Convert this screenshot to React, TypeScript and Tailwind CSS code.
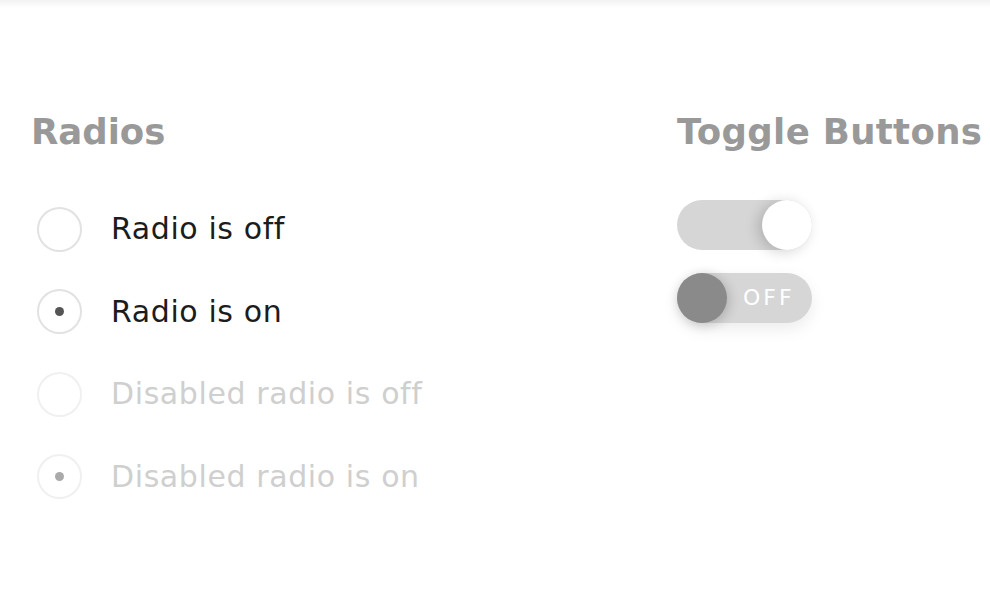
import React from 'react';

const font = { fontFamily: '"DejaVu Sans", "Liberation Sans", sans-serif' };

type RadioProps = { label: string; checked?: boolean; disabled?: boolean };

const Radio: React.FC<RadioProps> = ({ label, checked, disabled }) => (
  <label className="flex items-center h-[45px]">
    <span
      className={`ml-[6px] w-[45px] h-[45px] rounded-full border-2 flex items-center justify-center flex-shrink-0 ${
        disabled ? 'border-[#f0f0f0]' : 'border-[#e2e2e2]'
      }`}
    >
      {checked && (
        <span className={`w-[9px] h-[9px] rounded-full ${disabled ? 'bg-[#aaaaaa]' : 'bg-[#555555]'}`} />
      )}
    </span>
    <span
      className={`ml-[29px] text-[30px] leading-none tracking-[0.6px] ${
        disabled ? 'text-[#cfcfcf]' : 'text-[#1c1c1c]'
      }`}
    >
      {label}
    </span>
  </label>
);

export default function App() {
  return (
    <div className="min-h-[608px] w-full bg-white" style={font}>
      <div className="h-2 bg-gradient-to-b from-[#f2f2f2] to-white" />
      <div className="flex pt-[106px]">
        {/* Radios */}
        <div className="w-[677px] pl-[31px]">
          <h2 className="text-[35.5px] leading-none font-bold text-[#999999]">Radios</h2>
          <div className="mt-[57px] flex flex-col gap-[37.5px]">
            <Radio label="Radio is off" />
            <Radio label="Radio is on" checked />
            <Radio label="Disabled radio is off" disabled />
            <Radio label="Disabled radio is on" checked disabled />
          </div>
        </div>

        {/* Toggles */}
        <div className="flex-1">
          <h2 className="text-[35.5px] leading-none font-bold tracking-[0.35px] text-[#999999] whitespace-nowrap">
            Toggle Buttons
          </h2>
          <div className="mt-[50px] flex flex-col gap-[23px]">
            <button className="relative w-[135px] h-[50px] rounded-full bg-[#d6d6d6] flex items-center justify-end">
              <span className="w-[50px] h-[50px] rounded-full bg-white shadow-[-4px_2px_14px_rgba(0,0,0,0.18)]" />
            </button>
            <button className="relative w-[135px] h-[50px] rounded-full bg-[#d6d6d6] flex items-center shadow-[0_6px_16px_rgba(0,0,0,0.08)]">
              <span className="w-[50px] h-[50px] rounded-full bg-[#8a8a8a] shadow-[2px_2px_12px_rgba(0,0,0,0.2)]" />
              <span className="ml-[16px] text-[22px] leading-none tracking-[3px] text-white">OFF</span>
            </button>
          </div>
        </div>
      </div>
    </div>
  );
}
